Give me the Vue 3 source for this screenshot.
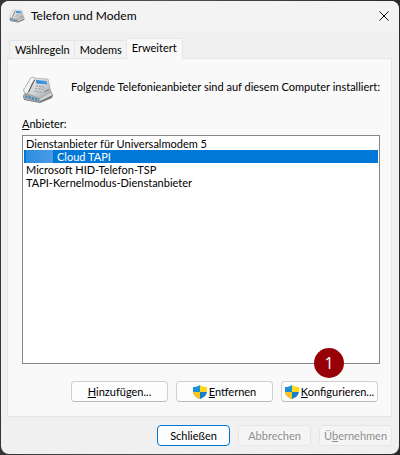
<script setup>
import { ref } from 'vue'

const tabs = ['Wählregeln', 'Modems', 'Erweitert']
const active = ref('Erweitert')
const providers = [
  { id: 'unimodem', name: 'Dienstanbieter für Universalmodem 5' },
  { id: 'cloud', name: 'Cloud TAPI', masked: true },
  { id: 'hid', name: 'Microsoft HID-Telefon-TSP' },
  { id: 'kernel', name: 'TAPI-Kernelmodus-Dienstanbieter' },
]
const selected = ref('cloud')
</script>

<template>
  <div class="desktop">
    <main class="dialog">
      <svg width="0" height="0" class="defs" aria-hidden="true">
        <defs>
          <linearGradient id="body" x1="0" y1="0" x2="1" y2="1">
            <stop offset="0" stop-color="#f0f0f1" />
            <stop offset="0.6" stop-color="#cbcccd" />
            <stop offset="1" stop-color="#9a9a9b" />
          </linearGradient>
          <linearGradient id="screen" x1="0" y1="0" x2="1" y2="0">
            <stop offset="0" stop-color="#2b83d4" />
            <stop offset="1" stop-color="#4b9fe6" />
          </linearGradient>
          <symbol id="phone" viewBox="0 0 32 32">
            <path d="M1 22 L5 16 L26 13 L31 21 L30 24 L18 29 L2 26 Z" fill="#77787a" />
            <path d="M1.500 21 L4 18 L18 23.500 L18 28 L2.500 25.500 Z" fill="#a5a8aa" />
            <path d="M18 23.500 L28 18 L30.500 21 L18 27 Z" fill="#d4d5d6" />
            <path d="M4 19 L10 4 L26 5 L29 18 L18 24.500 Z" fill="url(#body)" stroke="#9a9c9e" stroke-width="0.6" />
            <path d="M14 6 L24.500 7 L25.500 10.500 L14.500 9.500 Z" fill="url(#screen)" />
            <path d="M14 12 L23 13 M13.500 14.500 L22 15.500 M12.500 17 L20 18.500" stroke="#9b9da0" stroke-width="1.200" stroke-dasharray="2 1" />
            <path d="M22 18 L27 15.500" stroke="#7a7c7f" stroke-width="1" />
            <path d="M2 18 C1 15 2.500 14 3.500 13 L8 5 C9 3 12 2.500 13 4.500 C13 6.500 11 7.500 10 9.500 L7 17 C6 20 3 20 2 18 Z" fill="#f3f3f4" stroke="#8a8c8f" stroke-width="0.7" />
            <path d="M6.500 18 L12.500 6" stroke="#4c4e50" stroke-width="1" />
            <path d="M3.500 22.500 L17 26" stroke="#3a8fba" stroke-width="2.600" stroke-dasharray="2 1.300" />
          </symbol>
          <symbol id="shield" viewBox="0 0 14 14">
            <path d="M7 0 C5 1.500 2.500 2 0 2 V6 C0 10 3 12.500 7 14 V7 Z" fill="#1b91d8" />
            <path d="M7 0 C9 1.500 11.500 2 14 2 V7 H7 Z" fill="#ffd817" />
            <path d="M0 7 H7 V14 C3 12.500 0.500 10.500 0 7 Z" fill="#ffc61a" />
            <path d="M7 7 H14 C13.500 10.500 11 12.500 7 14 Z" fill="#1680c7" />
          </symbol>
        </defs>
      </svg>

      <header class="titlebar">
        <svg class="small-phone" aria-hidden="true"><use href="#phone" /></svg>
        <h1>Telefon und Modem</h1>
        <button class="close" aria-label="Schließen">
          <svg viewBox="0 0 10 10" aria-hidden="true"><path d="M0.500 0.500 L9.500 9.500 M9.500 0.500 L0.500 9.500" stroke="#111" fill="none" /></svg>
        </button>
      </header>

      <div class="content">
        <nav class="tabs" role="tablist">
          <button v-for="t in tabs" :key="t" role="tab" class="tab" :class="{ active: t === active }" :aria-selected="t === active" @click="active = t">{{ t }}</button>
        </nav>
        <section class="panel" role="tabpanel">
          <div class="intro">
            <svg class="big-phone" aria-hidden="true"><use href="#phone" /></svg>
            <p>Folgende Telefonieanbieter sind auf diesem Computer installiert:</p>
          </div>
          <label for="providers"><u>A</u>nbieter:</label>
          <select id="providers" v-model="selected" size="17">
            <option v-for="p in providers" :key="p.id" :value="p.id" :class="{ masked: p.masked }">{{ p.name }}</option>
          </select>
          <div class="actions">
            <button class="btn"><span><u>H</u>inzufügen...</span></button>
            <button class="btn"><svg class="shield" aria-hidden="true"><use href="#shield" /></svg><span><u>E</u>ntfernen</span></button>
            <div class="step-anchor">
              <button class="btn"><svg class="shield" aria-hidden="true"><use href="#shield" /></svg><span><u>K</u>onfigurieren...</span></button>
              <span class="step">1</span>
            </div>
          </div>
        </section>
        <footer class="footer">
          <button class="btn primary">Schließen</button>
          <button class="btn" disabled>Abbrechen</button>
          <button class="btn" disabled><span>Ü<u>b</u>ernehmen</span></button>
        </footer>
      </div>
    </main>
  </div>
</template>

<style>
body {
  margin: 0;
  background: #29292b;
}
</style>

<style scoped>
.desktop {
  box-sizing: border-box;
  min-height: 100vh;
  padding: 1px;
  display: flex;
  background: linear-gradient(90deg, #353538, #505052 40%, #29292b);
}
.dialog {
  flex: 1;
  display: flex;
  flex-direction: column;
  background: #f0f0f0;
  border-radius: 8px;
  overflow: hidden;
  font: 11px/13px Lato, "Liberation Sans", sans-serif;
  color: #000;
}
.defs {
  position: absolute;
}
button {
  font: inherit;
  color: inherit;
}
.titlebar {
  display: flex;
  align-items: center;
  height: 30px;
  padding-left: 8px;
  background: #f3f3f3;
}
.small-phone {
  width: 16px;
  height: 16px;
}
h1 {
  flex: 1;
  margin: 0 0 0 6px;
  font: 400 12px/16px Lato, "Noto Sans", sans-serif;
}
.close {
  display: flex;
  align-items: center;
  justify-content: center;
  width: 30px;
  height: 30px;
  padding: 0;
  border: 0;
  background: none;
}
.close svg {
  width: 10px;
  height: 10px;
}
.content {
  flex: 1;
  display: flex;
  flex-direction: column;
  padding: 7px 7px 8px 6px;
}
.tabs {
  display: flex;
  align-items: flex-end;
  padding-left: 2px;
}
.tab {
  height: 18px;
  padding: 0 4px 1px 5px;
  border: 1px solid #e5e5e5;
  border-bottom: 0;
  background: #f3f3f3;
}
.tab + .tab {
  border-left: 0;
}
.tab.active {
  position: relative;
  height: 21px;
  margin-bottom: -1px;
  padding: 0 5px 3px;
  background: #f9f9f9;
}
.panel {
  flex: 1;
  display: flex;
  flex-direction: column;
  padding: 15px 11px 14px 14px;
  border: 1px solid #e5e5e5;
  background: #f9f9f9;
}
.intro {
  display: flex;
  align-items: flex-start;
}
.big-phone {
  flex: none;
  width: 32px;
  height: 32px;
}
p {
  margin: 6px 0 0 17px;
  white-space: nowrap;
}
label {
  margin-top: 11px;
}
select {
  flex: 1;
  width: 100%;
  height: 0;
  min-height: 180px;
  margin-top: 5px;
  padding: 1px;
  border: 1px solid #828790;
  border-radius: 0;
  background: #fff;
  font: inherit;
  color: #000;
  outline: 0;
  overflow: hidden;
}
option {
  min-height: 13px;
  padding: 0 2px;
  line-height: 13px;
}
option:checked {
  background: linear-gradient(#0078d7, #0078d7);
  -webkit-text-fill-color: #fff;
}
option.masked {
  padding-left: 33px;
}
option.masked:checked {
  background: linear-gradient(90deg, #2b8edf, #4a9ce5) 2px 0 / 27px 13px no-repeat, linear-gradient(#0078d7, #0078d7);
}
.actions {
  display: flex;
  justify-content: flex-end;
  gap: 8px;
  margin-top: 17px;
  padding-right: 2px;
}
.btn {
  display: flex;
  align-items: center;
  justify-content: center;
  gap: 2px;
  width: 97px;
  height: 21px;
  padding: 0;
  border: 1px solid #d0d0d0;
  border-bottom-color: #bababa;
  border-radius: 4px;
  background: #fdfdfd;
  white-space: nowrap;
}
.shield {
  width: 14px;
  height: 14px;
}
.step-anchor {
  position: relative;
}
.step {
  position: absolute;
  left: 33px;
  top: -33px;
  width: 30px;
  height: 30px;
  border-radius: 50%;
  background: #970006;
  color: #fff;
  font: 16px/30px "Open Sans", sans-serif;
  text-align: center;
}
.footer {
  display: flex;
  justify-content: flex-end;
  gap: 8px;
  margin-top: 8px;
}
.footer .btn {
  width: 73px;
}
.footer .primary {
  border-color: #0078d4;
}
.footer .btn:disabled {
  border-color: #e6e6e6;
  background: #f5f5f5;
  color: #8f8f8f;
}
</style>
